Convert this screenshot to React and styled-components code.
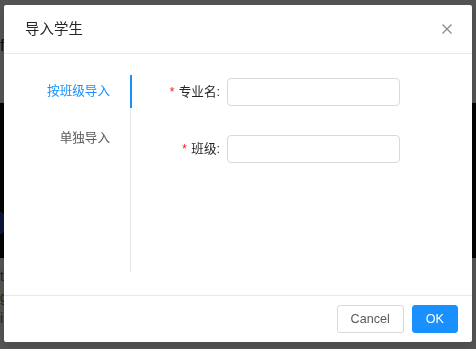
import React from "react"
import styled, { createGlobalStyle } from "styled-components"

const GlobalStyle = createGlobalStyle`
    html, body {
        margin: 0;
        padding: 0;
        background: #ffffff;
        font-family: "Liberation Sans", "Noto Sans CJK SC", sans-serif;
        font-size: 12.6px;
        line-height: 1.5;
        color: #262626;
    }
    * {
        box-sizing: border-box;
    }
`

// page behind the modal
const Page = styled.div`
    width: 100vw;
    height: 100vh;
    display: flex;
    flex-direction: column;
    overflow: hidden;
`

const TopBar = styled.div`
    height: 103px;
    padding-top: 34px;
    font-size: 16px;
    color: #222;
    border-bottom: 1px solid #f0f0f0;
`

const Banner = styled.div`
    height: 155px;
    background: #0a0c14;

    & svg {
        display: block;
    }
`

const PageText = styled.div`
    padding-top: 8px;
    font-size: 14px;
    color: #8a6a30;
`

// modal
const Overlay = styled.div`
    position: fixed;
    inset: 0;
    background: rgba(0, 0, 0, 0.67);
    display: flex;
    justify-content: center;
    align-items: flex-start;
    padding-top: 5px;
`

const Modal = styled.div`
    width: 468px;
    background: #ffffff;
    border-radius: 2px;
    box-shadow: 0 4px 12px rgba(0, 0, 0, 0.15);
    display: flex;
    flex-direction: column;
`

const Header = styled.div`
    height: 49px;
    padding: 0 20px 0 21px;
    border-bottom: 1px solid #e8e8e8;
    display: flex;
    align-items: center;
    justify-content: space-between;
`

const Title = styled.div`
    font-size: 14.4px;
    font-weight: 400;
    color: #262626;
    line-height: 20px;
    letter-spacing: 0.1px;
`

const CloseButton = styled.button`
    border: none;
    background: transparent;
    padding: 0;
    width: 10px;
    height: 10px;
    display: flex;
    cursor: pointer;
`

const Body = styled.div`
    padding: 21px 22px 23px 0;
    display: flex;
    height: 241px;
`

const TabNav = styled.div`
    width: 127px;
    border-right: 1px solid #e8e8e8;
    display: flex;
    flex-direction: column;
    gap: 14px;
`

const Tab = styled.div`
    position: relative;
    height: 33px;
    padding-right: 20px;
    display: flex;
    align-items: center;
    justify-content: flex-end;
    color: ${(p) => (p.active ? "#1890ff" : "#595959")};
    cursor: pointer;

    &::after {
        content: "";
        display: ${(p) => (p.active ? "block" : "none")};
        position: absolute;
        top: 0;
        bottom: 0;
        right: -2px;
        width: 2px;
        background: #1890ff;
    }
`

const Content = styled.div`
    flex: 1;
    padding: 3px 0 0 22px;
    display: flex;
    flex-direction: column;
    gap: 29px;
`

const FormRow = styled.div`
    display: flex;
    align-items: center;
    height: 28px;
`

const Label = styled.label`
    width: 74px;
    padding-right: 7px;
    display: flex;
    justify-content: flex-end;
    align-items: center;
    color: #262626;
    white-space: nowrap;
`

const Required = styled.span`
    color: #f5222d;
    font-family: "Liberation Mono", monospace;
    font-size: 12.6px;
    margin-right: 3px;
    line-height: 1;
    margin-top: 2px;
`

const Input = styled.input`
    width: 173px;
    height: 28px;
    border: 1px solid #d9d9d9;
    border-radius: 4px;
    padding: 0 10px;
    font: inherit;
    outline: none;
`

const Footer = styled.div`
    border-top: 1px solid #e8e8e8;
    padding: 9px 14px 9px;
    display: flex;
    justify-content: flex-end;
    gap: 8px;
`

const Button = styled.button`
    height: 28px;
    padding: 0 13px;
    border-radius: 3px;
    font-family: "Liberation Sans", "Noto Sans CJK SC", sans-serif;
    font-size: 12.6px;
    cursor: pointer;
    border: 1px solid ${(p) => (p.primary ? "#1890ff" : "#d9d9d9")};
    background: ${(p) => (p.primary ? "#1890ff" : "#ffffff")};
    color: ${(p) => (p.primary ? "#ffffff" : "#595959")};
`

export default function App() {
    return (
        <>
            <GlobalStyle />
            <Page>
                <TopBar>fi</TopBar>
                <Banner>
                    <svg width="476" height="155" viewBox="0 0 476 155">
                        <rect width="476" height="155" fill="#0a0c14" />
                        <circle cx="-4" cy="120" r="12" fill="#2a3fb0" />
                        <circle cx="30" cy="60" r="20" fill="#101830" />
                    </svg>
                </Banner>
                <PageText>
                    <div>t</div>
                    <div>g</div>
                    <div>i</div>
                </PageText>
            </Page>

            <Overlay>
                <Modal>
                    <Header>
                        <Title>导入学生</Title>
                        <CloseButton aria-label="close">
                            <svg width="10" height="10" viewBox="0 0 10 10">
                                <path
                                    d="M0.5 0.5 L9.5 9.5 M9.5 0.5 L0.5 9.5"
                                    stroke="#8c8c8c"
                                    strokeWidth="1.3"
                                />
                            </svg>
                        </CloseButton>
                    </Header>

                    <Body>
                        <TabNav>
                            <Tab active>按班级导入</Tab>
                            <Tab>单独导入</Tab>
                        </TabNav>
                        <Content>
                            <FormRow>
                                <Label>
                                    <Required>*</Required>专业名:
                                </Label>
                                <Input />
                            </FormRow>
                            <FormRow>
                                <Label>
                                    <Required>*</Required>班级:
                                </Label>
                                <Input />
                            </FormRow>
                        </Content>
                    </Body>

                    <Footer>
                        <Button>Cancel</Button>
                        <Button primary>OK</Button>
                    </Footer>
                </Modal>
            </Overlay>
        </>
    )
}
